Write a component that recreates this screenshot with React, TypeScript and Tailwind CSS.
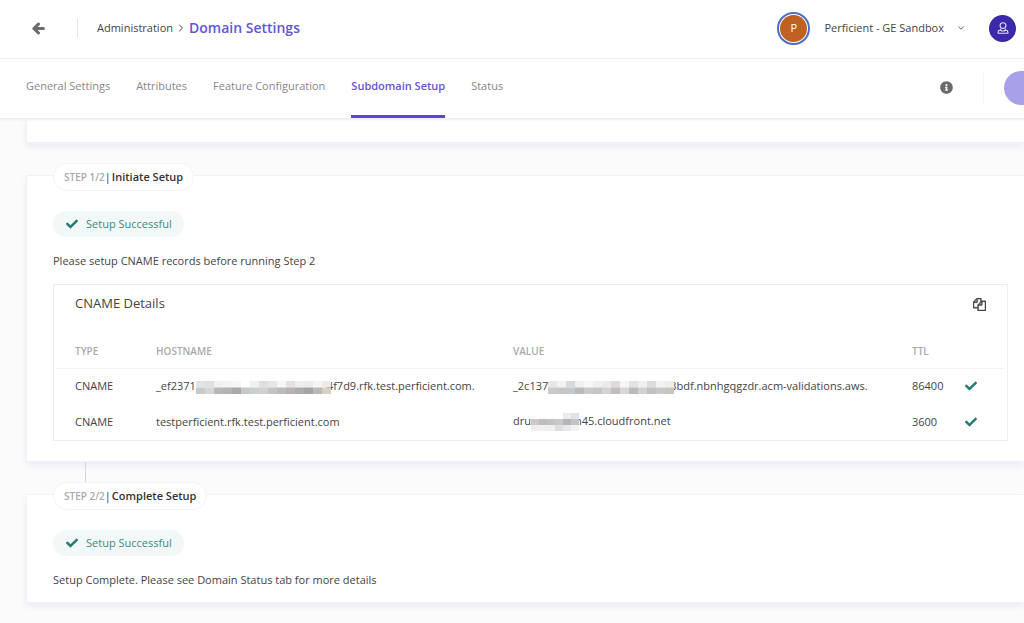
import type { ReactNode } from "react";
import { FaArrowLeft, FaCheck, FaInfoCircle } from "react-icons/fa";
import { ChevronDown, ChevronRight } from "lucide-react";

interface StepCardProps {
  step: string;
  title: string;
  message: string;
  children?: ReactNode;
}

interface MaskProps {
  rows: string[][];
  cell?: number;
}

const tabs = ["General Settings", "Attributes", "Feature Configuration", "Subdomain Setup", "Status"];

const hostMask = [
  ["#e3e3e3", "#e0e0e0", "#f0f0ef", "#f4f4f4", "#f7f7f7", "#ffffff", "#f1f1f0", "#dfdfdf", "#e6e6e6", "#f7f7f7", "#e2e2e1", "#efefef", "#ececec", "#f5f5f5", "#f1e9e2"],
  ["#c9c9c9", "#d6d6d4", "#b8b8b8", "#b3b3b3", "#aaaaaa", "#c5c9ca", "#c9d0d2", "#d0d0ce", "#c5c2bf", "#b9bcbe", "#b9b2ae", "#abaead", "#a5a5a2", "#b9bab7", "#d6d0c5"],
];

const valueMask = [
  ["#e6e6e6", "#f2f2f2", "#d5dadd", "#f0f0f0", "#f6f6f6", "#efefef", "#ebebeb", "#e2dada", "#f6f6f6", "#e2e2e2", "#efefef", "#dcdcde", "#f2f2f2", "#f0eeea"],
  ["#cccac8", "#c7c7c5", "#c2c8cc", "#b8babd", "#c9c9c7", "#c4c6c8", "#d1d4d4", "#c2bdc1", "#d6d8d8", "#b9bbc0", "#cfd1d2", "#bfc1c4", "#c9c9c9", "#c8c5be"],
];

const cloudMask = [
  ["#ffffff", "#ffffff", "#ffffff", "#ffffff", "#ececec", "#dee5e5"],
  ["#cbc9c7", "#bfbdbb", "#c4c2bf", "#c6c8c9", "#b7b2bd", "#c0c4c2"],
  ["#efeeed", "#f0f0ef", "#f1efee", "#dedede", "#e9e8ea", "#f2f2f2"],
];

// pixelated block that hides part of a record
function Mask({ rows, cell = 9 }: Readonly<MaskProps>) {
  const width = rows[0].length * cell;
  const height = rows.length === 3 ? 18 : 13;
  return (
    <svg className="relative -mr-1 inline-block align-middle" width={width} height={height} viewBox={`0 0 ${width} ${height}`} aria-hidden="true">
      {rows.map((row, y) =>
        row.map((color, x) => (
          <rect
            key={`${x}-${y}`}
            x={x * cell}
            y={(y * height) / rows.length}
            width={cell}
            height={height / rows.length}
            fill={color}
          />
        ))
      )}
    </svg>
  );
}

function CopyIcon() {
  return (
    <svg className="size-[13px]" viewBox="0 0 1792 1792" fill="currentColor" stroke="currentColor" strokeWidth="70" aria-hidden="true">
      <path d="M1696 384q40 0 68 28t28 68v1216q0 40-28 68t-68 28h-960q-40 0-68-28t-28-68v-288h-544q-40 0-68-28t-28-68v-672q0-40 20-88t48-76l408-408q28-28 76-48t88-20h416q40 0 68 28t28 68v328q68-40 128-40h416zm-544 213l-299 299h299v-299zm-640-384l-299 299h299v-299zm196 647l316-316v-416h-384v416q0 40-28 68t-68 28h-416v640h512v-256q0-40 20-88t48-76zm956 804v-1152h-384v416q0 40-28 68t-68 28h-416v640h896z" />
    </svg>
  );
}

function UserIcon() {
  return (
    <svg className="size-3" viewBox="0 0 12 12" fill="none" stroke="currentColor" strokeWidth="1.1" aria-hidden="true">
      <circle cx="6" cy="3.6" r="2.9" />
      <path d="M3.9 6.8 3.2 8C1.8 8.2 1.1 9 1.1 10.2v1h9.8v-1C10.9 9 10.2 8.2 8.8 8l-.7-1.2" />
      <path d="M3.2 8c1.6 1.2 4 1.2 5.6 0" />
    </svg>
  );
}

function StepCard({ step, title, message, children }: Readonly<StepCardProps>) {
  return (
    <section className="border border-r-0 border-[#f1f0fa] bg-white pr-4 pl-[26px] shadow-[0_4px_6px_#edecf8]">
      <h2 className="-mt-[13px] flex h-7 w-fit items-center rounded-full border border-gray-100 bg-white px-2.5 font-semibold text-[#333]">
        <span className="text-[10px] text-[#aaa]">{step}</span>
        <span className="mr-px font-normal">|</span>
        {title}
      </h2>
      <p className="mt-5 flex h-[26px] w-fit items-center gap-2 rounded-full bg-[#f2f8f8] pr-3 pl-[13px] text-[#3c8a82]">
        <FaCheck className="size-3 text-[#23786f]" />
        Setup Successful
      </p>
      <p className="mt-4 leading-4">{message}</p>
      {children}
    </section>
  );
}

function CnameDetails() {
  return (
    <div className="mt-[15px] border border-[#eeeeee] px-0.5">
      <div className="flex h-[38px] items-center justify-between px-[19px]">
        <h3 className="text-[13px]">CNAME Details</h3>
        <button type="button" aria-label="Copy records">
          <CopyIcon />
        </button>
      </div>
      <table className="mt-3 w-full table-fixed text-left">
        <thead>
          <tr className="h-[33px] border-b border-gray-100 text-[10px] text-[#aaa]">
            <th className="w-[100px] pl-[19px] font-semibold">TYPE</th>
            <th className="w-[357px] font-semibold">HOSTNAME</th>
            <th className="font-semibold">VALUE</th>
            <th className="w-[53px] font-semibold">TTL</th>
            <th className="w-10" aria-label="State" />
          </tr>
        </thead>
        <tbody>
          <tr className="h-9">
            <td className="pl-[19px]">CNAME</td>
            <td className="whitespace-nowrap">_ef2371<Mask rows={hostMask} />4f7d9.rfk.test.perficient.com.</td>
            <td className="whitespace-nowrap">_2c137<Mask rows={valueMask} />3bdf.nbnhgqgzdr.acm-validations.aws.</td>
            <td>86400</td>
            <td><FaCheck className="size-3 text-[#23786f]" /></td>
          </tr>
          <tr className="h-9">
            <td className="pl-[19px]">CNAME</td>
            <td>testperficient.rfk.test.perficient.com</td>
            <td className="whitespace-nowrap">dru<Mask rows={cloudMask} cell={8} />n45.cloudfront.net</td>
            <td>3600</td>
            <td><FaCheck className="size-3 text-[#23786f]" /></td>
          </tr>
        </tbody>
      </table>
    </div>
  );
}

export default function App() {
  return (
    <div className="min-h-screen overflow-hidden bg-[#fbfbfb] font-['Open_Sans',sans-serif] text-[11px] text-[#444]">
      <header className="flex h-[59px] items-center border-b border-[#eeeeee] bg-white pr-2 pb-0.5 pl-8">
        <button type="button" aria-label="Back" className="text-[#6b6b6b]">
          <FaArrowLeft className="size-[13px]" stroke="currentColor" strokeWidth="40" />
        </button>
        <nav className="ml-8 flex h-5 items-center gap-0.5 border-l border-gray-200 pl-[19px]">
          <a href="#administration">Administration</a>
          <ChevronRight className="size-3" />
          <h1 className="text-sm font-semibold text-[#6353d9]">Domain Settings</h1>
        </nav>
        <div className="ml-auto flex items-center">
          <span className="flex size-[33px] items-center justify-center rounded-full border-2 border-[#4a6fc4] bg-white">
            <span className="flex size-[27px] items-center justify-center rounded-full bg-[#bf6120] text-white">P</span>
          </span>
          <button type="button" className="ml-3.5 flex items-center gap-3">
            Perficient - GE Sandbox
            <ChevronDown className="size-2.5" />
          </button>
          <button type="button" aria-label="Account" className="ml-[23px] flex size-[27px] items-center justify-center rounded-full bg-[#3a29a8] text-[#e0dcff]">
            <UserIcon />
          </button>
        </div>
      </header>

      <div className="relative flex h-[60px] items-center border-b border-[#eeeeee] bg-white pl-[26px] shadow-[0_1px_2px_#eeeeee]">
        <nav className="flex h-full gap-[26px] text-[#888]">
          {tabs.map((tab) => (
            <a
              key={tab}
              href="#tab"
              className={
                tab === "Subdomain Setup"
                  ? "border-b-3 border-[#5a48dc] pt-[19px] font-semibold text-[#6353d9]"
                  : "pt-[19px]"
              }
            >
              {tab}
            </a>
          ))}
        </nav>
        <div className="ml-auto flex items-center pb-0.5">
          <button type="button" aria-label="Information" className="text-[#6b6b6b]">
            <FaInfoCircle className="size-[13px]" />
          </button>
          <div className="ml-[30px] border-l border-gray-100 pl-5">
            <button type="button" aria-label="Publish" className="block h-[34px] w-5 rounded-l-full bg-[#a9a0ea]" />
          </div>
        </div>
      </div>

      <main className="pl-[26px]">
        <div className="h-6 border border-t-0 border-r-0 border-[#f1f0fa] bg-white shadow-[0_4px_6px_#edecf8]" />
        <div className="mt-8">
          <StepCard step="STEP 1/2" title="Initiate Setup" message="Please setup CNAME records before running Step 2">
            <CnameDetails />
            <div className="h-5" />
          </StepCard>
        </div>
        <div className="ml-[59px] h-5 w-px bg-gray-300" />
        <div className="mt-3">
          <StepCard step="STEP 2/2" title="Complete Setup" message="Setup Complete. Please see Domain Status tab for more details">
            <div className="h-3.5" />
          </StepCard>
        </div>
      </main>
    </div>
  );
}
